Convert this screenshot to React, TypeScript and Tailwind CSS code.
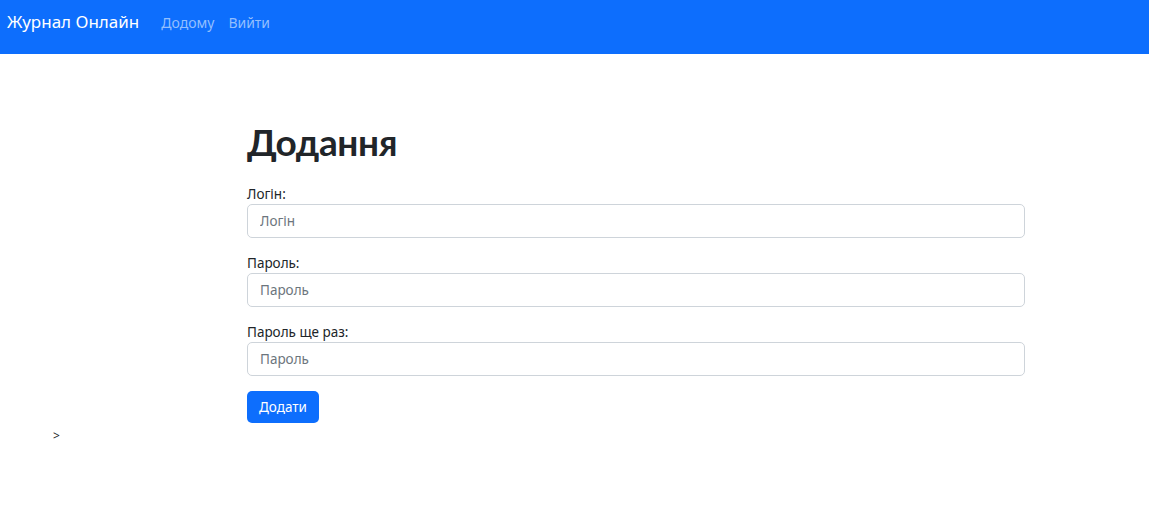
import React from "react";

export default function App() {
  const font = { fontFamily: '"Noto Sans", "Open Sans", sans-serif' };
  const lato = { fontFamily: 'Lato, "Noto Sans", sans-serif' };
  return (
    <div className="min-h-[507px] bg-white text-[#212529]" style={font}>
      <nav className="h-[54px] bg-[#0d6efd] flex items-start pt-[7px] pl-[7px]">
        <div className="flex items-center h-[30px]">
          <span className="text-white text-[17px] leading-[30px] mr-[22px]">Журнал Онлайн</span>
          <span className="text-[14px] text-[#93bffe] mr-[14px]">Додому</span>
          <span className="text-[14px] text-[#93bffe]">Вийти</span>
        </div>
      </nav>
      <main className="w-[778px] ml-[247px] pt-[64px]">
        <h1 className="text-[37px] leading-[48px] font-bold mb-[18px] tracking-[-0.4px]" style={lato}>Додання</h1>
        <div className="flex flex-col gap-[15px]">
          {[
            ["Логін:", "Логін"],
            ["Пароль:", "Пароль"],
            ["Пароль ще раз:", "Пароль"],
          ].map(([label, ph], i) => (
            <div key={i} className="flex flex-col">
              <label className="text-[13.5px] leading-[20px]">{label}</label>
              <input
                type={i === 0 ? "text" : "password"}
                placeholder={ph}
                className="h-[34px] w-full border border-[#ced4da] rounded-[5px] px-[12px] text-[13.5px] placeholder:text-[#6c757d] outline-none"
              />
            </div>
          ))}
          <div>
            <button className="h-[32px] w-[72px] rounded-[5px] bg-[#0d6efd] text-white text-[13.5px]">
              Додати
            </button>
          </div>
        </div>
      </main>
      <div className="ml-[53px] mt-[4px] text-[12px] leading-[18px]">&gt;</div>
    </div>
  );
}
